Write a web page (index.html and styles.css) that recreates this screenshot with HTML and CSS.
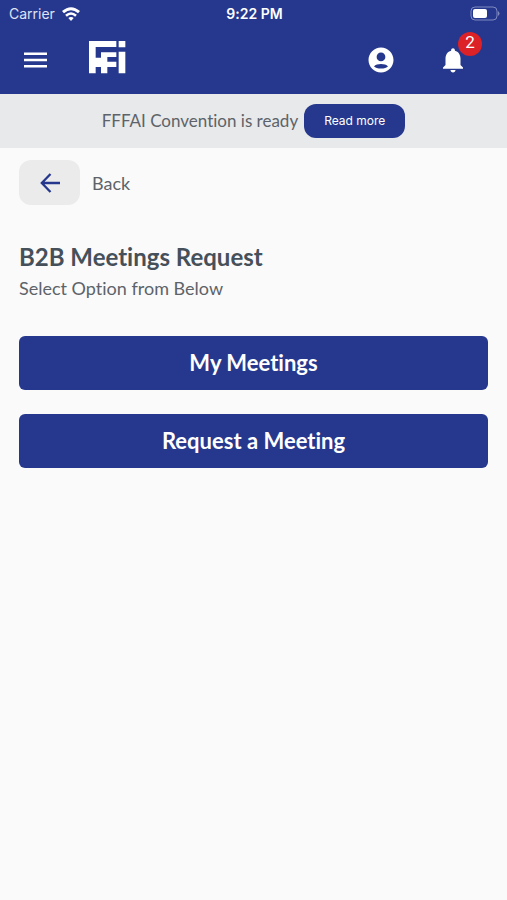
FILE: index.html
```html
<!DOCTYPE html>
<html lang="en">
<head>
<meta charset="utf-8">
<meta name="viewport" content="width=device-width, initial-scale=1">
<title>B2B Meetings Request</title>
<link rel="stylesheet" href="styles.css">
</head>
<body>
<header class="header">
  <div class="status">
    <div class="carrier">
      <span>Carrier</span>
      <svg width="18" height="14" viewBox="0 0 18 14" fill="none" stroke="#fff" stroke-width="3" aria-hidden="true">
        <path d="M1 5.200Q9-1.800 17 5.200"/>
        <path d="M4 8.700Q9 4.300 14 8.700" stroke-width="2.600"/>
        <path d="M9 14 6.300 11Q9 8.800 11.700 11Z" fill="#fff" stroke="none"/>
      </svg>
    </div>
    <time class="clock">9:22 PM</time>
    <svg class="battery" width="31" height="15" viewBox="0 0 31 15" aria-hidden="true">
      <rect x="2" y="1" width="26" height="13" rx="4" fill="none" stroke="#7f89c0"/>
      <rect x="4" y="3" width="14" height="9" rx="2" fill="#fff"/>
      <path d="M29 5q3 2.500 0 5z" fill="#7f89c0"/>
    </svg>
  </div>
  <nav class="nav">
    <button class="icon-button" aria-label="Menu">
      <svg width="24" height="18" viewBox="0 0 24 18" fill="#fff"><path d="M0 1.500h23v2.400H0zM0 7.800h23v2.400H0zM0 14h23v2.400H0z"/></svg>
    </button>
    <a class="logo" href="#" aria-label="Home">
      <svg width="37" height="33" viewBox="0 0 111 99" fill="#fff">
        <path d="M0 0H82V18H20V50H36V34H82V48H55V62H82V78H55V97H36V78H20V97H0Z"/>
        <path d="M89 0h20v19H89zM89 32h20v65H89z"/>
      </svg>
    </a>
    <div class="actions">
      <button class="icon-button" aria-label="Account">
        <svg width="30" height="30" viewBox="0 0 24 24" fill="#fff"><path d="M12 2C6.480 2 2 6.480 2 12s4.480 10 10 10 10-4.480 10-10S17.520 2 12 2zm0 4c1.930 0 3.500 1.570 3.500 3.500S13.930 13 12 13s-3.500-1.570-3.500-3.500S10.070 6 12 6zm0 12.800c-2.500 0-4.700-.700-5.600-1.700C7.500 15.800 9.680 15.200 12 15.200s4.500.600 5.600 1.900C16.700 18.100 14.500 18.800 12 18.800z"/></svg>
      </button>
      <button class="icon-button bell" aria-label="Notifications">
        <svg width="30" height="30" viewBox="0 0 24 24" fill="#fff"><path d="M12 22c1.100 0 2-.900 2-2h-4c0 1.100.890 2 2 2zm6-6v-5c0-3.070-1.640-5.640-4.500-6.320V4c0-.830-.670-1.500-1.500-1.500s-1.500.670-1.500 1.500v.680C7.630 5.360 6 7.920 6 11v5l-2 2v1h16v-1l-2-2z"/></svg>
        <span class="badge">2</span>
      </button>
    </div>
  </nav>
</header>
<section class="banner">
  <span>FFFAI Convention is ready</span>
  <button class="read-more">Read more</button>
</section>
<main class="main">
  <div class="back-row">
    <button class="back" id="back" aria-label="Back">
      <svg width="20" height="20" viewBox="0 0 20 20" fill="none" stroke="#26388d" stroke-width="2.300"><path d="M20 10H2M10.500 1 1.800 10l8.700 9"/></svg>
    </button>
    <label for="back">Back</label>
  </div>
  <h1>B2B Meetings Request</h1>
  <p>Select Option from Below</p>
  <div class="options">
    <button class="option">My Meetings</button>
    <button class="option">Request a Meeting</button>
  </div>
</main>
</body>
</html>
```
FILE: styles.css
```css
* { box-sizing: border-box; }
body {
  margin: 0;
  background: #fafafa;
  color: #5d6369;
  font-family: Lato, sans-serif;
  font-size: 18px;
  font-variant-ligatures: none;
  line-height: 24px;
}
button {
  margin: 0;
  padding: 0;
  border: 0;
  background: none;
  color: #fff;
  font: inherit;
  font-variant-ligatures: none;
  cursor: pointer;
}
svg { display: block; }
.header { background: #26388d; color: #fff; }
.status {
  display: grid;
  grid-template-columns: 1fr auto 1fr;
  align-items: center;
  height: 27px;
  padding: 0 7px 0 9px;
  font-family: Inter, sans-serif;
  font-size: 14px;
}
.carrier { display: flex; align-items: center; gap: 7px; color: #dfe3f5; }
.clock { font-weight: 600; }
.battery { justify-self: end; }
.nav {
  display: flex;
  align-items: center;
  height: 67px;
  padding: 0 39px 2px 24px;
}
.logo { margin: 0 0 4px 41px; }
.actions { display: flex; gap: 42px; margin-left: auto; }
.bell { position: relative; }
.badge {
  position: absolute;
  top: -13px;
  right: -14px;
  width: 24px;
  height: 24px;
  border-radius: 50%;
  background: #dc2127;
  font-family: Roboto, sans-serif;
  font-size: 17px;
  line-height: 20px;
}
.banner {
  display: flex;
  align-items: center;
  justify-content: center;
  gap: 6px;
  height: 54px;
  background: #e7e9eb;
  font-size: 17px;
}
.read-more {
  padding: 5px 20px;
  border-radius: 12px;
  background: #26388d;
  font-family: Inter, sans-serif;
  font-size: 12px;
}
.main { padding: 12px 19px; }
.back-row { display: flex; align-items: center; gap: 12px; }
.back {
  display: grid;
  place-items: center;
  width: 61px;
  height: 45px;
  border-radius: 12px;
  background: #ebebeb;
}
h1 {
  margin: 36px 0 0;
  color: #46505a;
  font-size: 24px;
  line-height: 32px;
}
p { margin: 0; line-height: 31px; }
.options { display: grid; gap: 24px; margin-top: 32px; }
.option {
  padding: 12px;
  border-radius: 6px;
  background: #26388d;
  font-size: 22px;
  font-weight: 700;
  line-height: 30px;
}
```
